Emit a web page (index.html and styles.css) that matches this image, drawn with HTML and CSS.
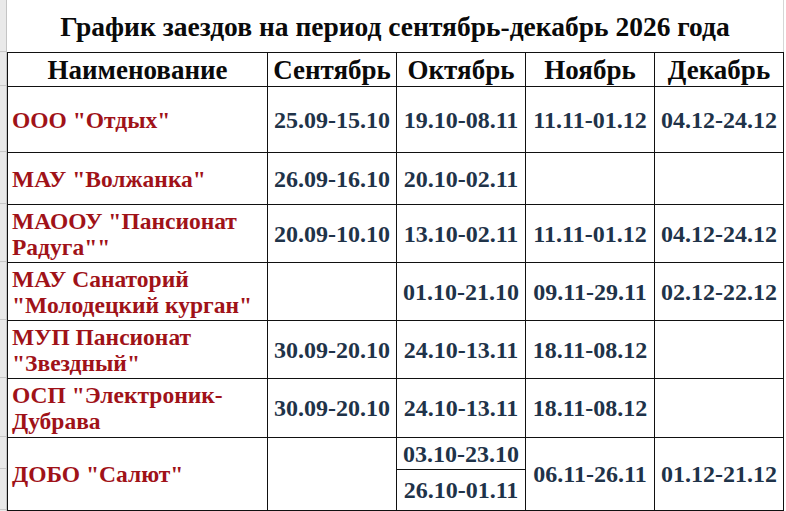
FILE: index.html
```html
<!DOCTYPE html>
<html lang="ru">
<head>
<meta charset="utf-8">
<title>График заездов</title>
<link rel="stylesheet" href="styles.css">
</head>
<body>
<div class="page">
  <div class="strip">
    <div class="seg h52"></div>
    <div class="seg h34"></div>
    <div class="seg h66"></div>
    <div class="seg h52"></div>
    <div class="seg h58"></div>
    <div class="seg h58"></div>
    <div class="seg h58"></div>
    <div class="seg h59"></div>
    <div class="seg h32"></div>
    <div class="seg h41"></div>
  </div>
  <div class="sheet">
    <div class="title">График заездов на период сентябрь-декабрь 2026 года</div>
    <table class="grid">
      <colgroup>
        <col class="c-name">
        <col class="c-month">
        <col class="c-month">
        <col class="c-month">
        <col class="c-month">
      </colgroup>
      <tr class="r-head">
        <th>Наименование</th>
        <th>Сентябрь</th>
        <th>Октябрь</th>
        <th>Ноябрь</th>
        <th>Декабрь</th>
      </tr>
      <tr class="r66">
        <td class="name">ООО "Отдых"</td>
        <td>25.09-15.10</td>
        <td>19.10-08.11</td>
        <td>11.11-01.12</td>
        <td>04.12-24.12</td>
      </tr>
      <tr class="r52">
        <td class="name">МАУ "Волжанка"</td>
        <td>26.09-16.10</td>
        <td>20.10-02.11</td>
        <td></td>
        <td></td>
      </tr>
      <tr class="r58">
        <td class="name">МАООУ "Пансионат Радуга""</td>
        <td>20.09-10.10</td>
        <td>13.10-02.11</td>
        <td>11.11-01.12</td>
        <td>04.12-24.12</td>
      </tr>
      <tr class="r58">
        <td class="name">МАУ Санаторий "Молодецкий курган"</td>
        <td></td>
        <td>01.10-21.10</td>
        <td>09.11-29.11</td>
        <td>02.12-22.12</td>
      </tr>
      <tr class="r58">
        <td class="name">МУП Пансионат "Звездный"</td>
        <td>30.09-20.10</td>
        <td>24.10-13.11</td>
        <td>18.11-08.12</td>
        <td></td>
      </tr>
      <tr class="r59">
        <td class="name">ОСП "Электроник-Дубрава</td>
        <td>30.09-20.10</td>
        <td>24.10-13.11</td>
        <td>18.11-08.12</td>
        <td></td>
      </tr>
      <tr class="r32">
        <td class="name" rowspan="2">ДОБО "Салют"</td>
        <td rowspan="2"></td>
        <td>03.10-23.10</td>
        <td rowspan="2">06.11-26.11</td>
        <td rowspan="2">01.12-21.12</td>
      </tr>
      <tr class="r41">
        <td>26.10-01.11</td>
      </tr>
    </table>
  </div>
</div>
</body>
</html>
```

FILE: styles.css
```css
* { box-sizing: border-box; }
html, body { margin: 0; padding: 0; background: #ffffff; }
body { font-family: "Liberation Serif", "Times New Roman", serif; }

.page {
  display: flex;
  align-items: flex-start;
  width: 786px;
  height: 511px;
  overflow: hidden;
}

.strip {
  width: 7px;
  flex: none;
  background: #e9e9e9;
  border-right: 1px solid #c4c4c4;
  display: flex;
  flex-direction: column;
  height: 511px;
}
.seg { border-bottom: 1px solid #c8c8c8; flex: none; }
.h52 { height: 52px; }
.h34 { height: 34px; }
.h66 { height: 66px; }
.h58 { height: 58px; }
.h59 { height: 59px; }
.h32 { height: 32px; }
.h41 { height: 41px; }

.sheet {
  width: 777px;
  flex: none;
}

.title {
  height: 52px;
  display: flex;
  align-items: center;
  justify-content: center;
  font-weight: bold;
  font-size: 27.5px;
  color: #0a0a0a;
  padding-top: 2px;
  border-right: 1px solid #d6d6d6;
  white-space: nowrap;
}

.grid {
  border-collapse: collapse;
  table-layout: fixed;
  width: 777px;
}
.c-name { width: 260px; }
.c-month { width: 129px; }

.grid th, .grid td {
  border: 1px solid #111;
  padding: 0;
  text-align: center;
  vertical-align: middle;
  font-weight: bold;
  white-space: nowrap;
}
.grid th {
  font-size: 27px;
  line-height: 30px;
  color: #0a0a0a;
  padding-top: 1px;
}
.grid td {
  font-size: 24px;
  color: #1f3349;
  line-height: 26px;
}
.grid td.name {
  text-align: left;
  padding-left: 4px;
  font-size: 23.5px;
  color: #a01218;
  white-space: normal;
}

.r-head { height: 34px; }
.r66 { height: 66px; }
.r52 { height: 52px; }
.r58 { height: 58px; }
.r59 { height: 59px; }
.r32 { height: 32px; }
.r41 { height: 41px; }
```
